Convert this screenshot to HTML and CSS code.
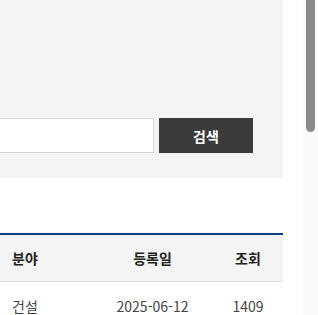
FILE: index.html
```html
<!DOCTYPE html>
<html lang="ko">
<head>
    <meta charset="UTF-8">
    <meta name="viewport" content="width=device-width, initial-scale=1.0">
    <title>자료실 - 목록</title>
    <link rel="stylesheet" href="styles.css">
</head>
<body>
    <div class="page">
        <div class="main">
            <div class="search-box">
                <form class="search-form">
                    <input type="text" class="search-input" title="검색어 입력">
                    <button type="button" class="search-btn">검색</button>
                </form>
            </div>

            <div class="board">
                <div class="row head">
                    <div class="cell">분야</div>
                    <div class="cell date">등록일</div>
                    <div class="cell">조회</div>
                </div>
                <div class="row">
                    <div class="cell">건설</div>
                    <div class="cell date">2025-06-12</div>
                    <div class="cell">1409</div>
                </div>
            </div>
        </div>

        <div class="scrollbar">
            <div class="thumb"></div>
        </div>
    </div>
</body>
</html>
```

FILE: styles.css
```css
body {
    font-family: "Noto Sans CJK KR", "Noto Sans", sans-serif;
    background-color: #fff;
    margin: 0;
    padding: 0;
    overflow: hidden;
}
.page {
    display: flex;
    height: 315px;
}
.main {
    width: 283px;
    overflow: hidden;
}

/* search area */
.search-box {
    background-color: #f4f4f4;
    padding: 118px 30px 25px 0;
}
.search-form {
    display: flex;
    justify-content: flex-end;
    gap: 5px;
}
.search-input {
    flex: none;
    width: 300px;
    height: 35px;
    box-sizing: border-box;
    border: 1px solid #d6d6d6;
    background-color: #fff;
    margin: 0;
}
.search-btn {
    flex: none;
    width: 94px;
    height: 35px;
    border: none;
    background-color: #3b3b3b;
    color: #fff;
    font-family: inherit;
    font-size: 14px;
    font-weight: bold;
    cursor: pointer;
}

/* list */
.board {
    margin-top: 55px;
    border-top: 2px solid #0b4283;
}
.row {
    display: grid;
    grid-template-columns: 50px 1fr 70px;
    align-items: center;
    height: 48px;
    font-size: 14px;
    color: #444;
}
.row.head {
    height: 46px;
    background-color: #f4f4f4;
    border-bottom: 1px solid #dcdcdc;
    font-weight: bold;
    color: #222;
}
.cell {
    text-align: center;
}
.cell.date {
    padding-left: 42px;
}

/* fake scrollbar */
.scrollbar {
    width: 15px;
    margin-left: 20px;
    background-color: #fafafa;
}
.thumb {
    width: 9px;
    height: 132px;
    margin-left: 3px;
    background-color: #8a8a8a;
    border-radius: 0 0 5px 5px;
}
```
